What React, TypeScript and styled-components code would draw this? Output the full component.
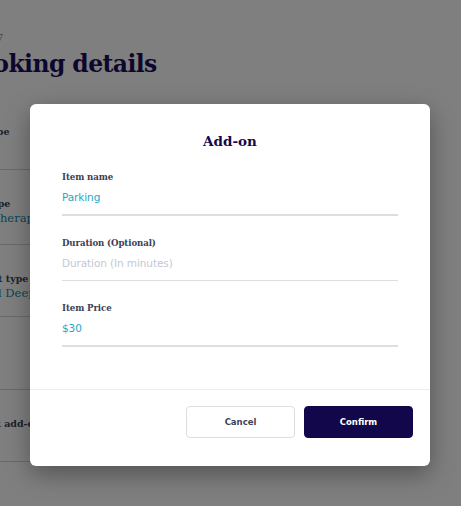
import React from 'react';
import styled, { createGlobalStyle } from 'styled-components';

const GlobalStyle = createGlobalStyle`
  html, body {
    margin: 0;
    padding: 0;
    background: #ffffff;
    font-family: "DejaVu Serif", "Liberation Serif", serif;
    overflow: hidden;
  }
`;

const Page = styled.div`
  width: 461px;
  height: 506px;
  overflow: hidden;
  position: relative;
  background: #ffffff;
`;

const PageColumn = styled.div`
  margin-left: -41px;
  padding-top: 32px;
  width: 330px;
`;

const StepText = styled.div`
  font-size: 9.5px;
  line-height: 12px;
  color: #8e90a0;
  margin-left: -8px;
`;

const PageTitle = styled.h1`
  margin: 3px 0 17px 0;
  font-size: 23.5px;
  font-weight: 700;
  letter-spacing: -0.6px;
  color: #1b0f5c;
  line-height: 34px;
`;

const DetailRow = styled.div<{ $height: number }>`
  box-sizing: border-box;
  height: ${(p) => p.$height}px;
  border-bottom: 1px solid #d2d4da;
  padding-top: 28px;
`;

const DetailLabel = styled.div`
  font-size: 9.5px;
  line-height: 12px;
  font-weight: 700;
  color: #3b3f55;
`;

const DetailValue = styled.div`
  margin-top: 1px;
  font-size: 11.5px;
  line-height: 14px;
  color: #178ca6;
`;

const Overlay = styled.div`
  position: absolute;
  inset: 0;
  background: rgba(0, 0, 0, 0.5);
  display: flex;
  justify-content: center;
  align-items: flex-start;
  padding-top: 104px;
`;

const Modal = styled.div`
  width: 400px;
  background: #ffffff;
  border-radius: 6px;
  box-shadow: 0 8px 24px rgba(0, 0, 0, 0.35);
  margin-left: -1px;
`;

const ModalBody = styled.div`
  padding: 28px 32px 42px;
`;

const ModalTitle = styled.h2`
  margin: 0 0 21px;
  text-align: center;
  font-size: 13.5px;
  font-weight: 700;
  color: #14094a;
  line-height: 18px;
`;

const Field = styled.div`
  margin-bottom: 21px;

  &:last-child {
    margin-bottom: 0;
  }
`;

const FieldLabel = styled.label`
  display: block;
  font-size: 8.6px;
  font-weight: 700;
  color: #3a3e55;
  line-height: 12px;
  letter-spacing: -0.1px;
`;

const FieldInput = styled.input<{ $thick?: boolean }>`
  display: block;
  width: 100%;
  box-sizing: border-box;
  border: none;
  border-bottom: ${(p) => (p.$thick ? '2px' : '1px')} solid #dcdee3;
  padding: 8px 0 11px;
  margin-bottom: ${(p) => (p.$thick ? '0' : '1px')};
  font-family: "DejaVu Sans", "Liberation Sans", sans-serif;
  font-size: 10.5px;
  color: #1ea8c8;
  background: transparent;
  outline: none;
  letter-spacing: -0.1px;

  &::placeholder {
    color: #c4c8d2;
  }
`;

const ModalFooter = styled.div`
  border-top: 1px solid #eceef1;
  padding: 16px 17px 28px;
  display: flex;
  justify-content: flex-end;
  gap: 9px;
`;

const Button = styled.button<{ $primary?: boolean }>`
  width: 109px;
  height: 32px;
  border-radius: 4px;
  font-family: "DejaVu Sans", "Liberation Sans", sans-serif;
  font-size: 8.5px;
  font-weight: 700;
  cursor: pointer;
  border: 1px solid ${(p) => (p.$primary ? '#12074a' : '#dcdee3')};
  background: ${(p) => (p.$primary ? '#12074a' : '#ffffff')};
  color: ${(p) => (p.$primary ? '#ffffff' : '#3d4258')};
`;

const App: React.FC = () => {
  return (
    <Page>
      <GlobalStyle />
      <PageColumn>
        <StepText>Step 3 of 7</StepText>
        <PageTitle>Booking details</PageTitle>
        <DetailRow $height={72}>
          <DetailLabel>Area type</DetailLabel>
        </DetailRow>
        <DetailRow $height={75}>
          <DetailLabel>Bath type</DetailLabel>
          <DetailValue>Hydrotherapy</DetailValue>
        </DetailRow>
        <DetailRow $height={72}>
          <DetailLabel>Account type</DetailLabel>
          <DetailValue>Special Deep Tissue</DetailValue>
        </DetailRow>
        <DetailRow $height={73} />
        <DetailRow $height={72}>
          <DetailLabel>Current add-ons</DetailLabel>
        </DetailRow>
      </PageColumn>
      <Overlay>
        <Modal>
          <ModalBody>
            <ModalTitle>Add-on</ModalTitle>
            <Field>
              <FieldLabel htmlFor="item-name">Item name</FieldLabel>
              <FieldInput id="item-name" $thick defaultValue="Parking" />
            </Field>
            <Field>
              <FieldLabel htmlFor="duration">Duration (Optional)</FieldLabel>
              <FieldInput id="duration" placeholder="Duration (In minutes)" />
            </Field>
            <Field>
              <FieldLabel htmlFor="price">Item Price</FieldLabel>
              <FieldInput id="price" $thick defaultValue="$30" />
            </Field>
          </ModalBody>
          <ModalFooter>
            <Button type="button">Cancel</Button>
            <Button type="button" $primary>
              Confirm
            </Button>
          </ModalFooter>
        </Modal>
      </Overlay>
    </Page>
  );
};

export default App;
